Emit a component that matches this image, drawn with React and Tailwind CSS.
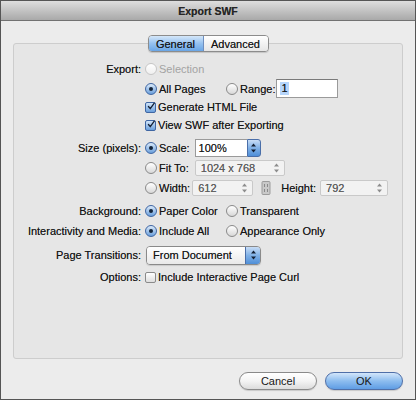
import React from 'react';

function Radio({ checked, disabled }) {
    const look = checked
        ? 'border-[#3f66a3] bg-linear-to-b from-[#dcebfa] to-[#6a9fdb]'
        : disabled
            ? 'border-[#c6c6c6] bg-linear-to-b from-[#ffffff] to-[#efefef]'
            : 'border-[#8a8a8a] bg-linear-to-b from-[#ffffff] to-[#d8d8d8]';
    return (
        <span className={`flex h-[12px] w-[12px] shrink-0 items-center justify-center rounded-full border ${look}`}>
            {checked && <span className="h-[4px] w-[4px] rounded-full bg-[#14243a]" />}
        </span>
    );
}

function Checkbox({ checked }) {
    return (
        <span className={`flex h-[11px] w-[11px] shrink-0 items-center justify-center rounded-[2px] border ${checked ? 'border-[#3f66a3] bg-linear-to-b from-[#d2e5f9] to-[#6a9fdb]' : 'border-[#8a8a8a] bg-linear-to-b from-[#ffffff] to-[#dedede]'}`}>
            {checked && (
                <svg width="11" height="11" viewBox="0 0 11 11" className="-mt-[2px] ml-[1px]">
                    <path d="M2 5.5 L4.5 8.5 L10 1" fill="none" stroke="#142033" strokeWidth="1.8" strokeLinecap="round" strokeLinejoin="round" />
                </svg>
            )}
        </span>
    );
}

function Arrows({ color = '#ffffff' }) {
    return (
        <svg width="7" height="10" viewBox="0 0 7 10">
            <path d="M3.5 0.5 L6 3.5 L1 3.5 Z" fill={color} />
            <path d="M3.5 9.5 L6 6.5 L1 6.5 Z" fill={color} />
        </svg>
    );
}

function BlueStepper({ className = '' }) {
    return (
        <span className={`flex items-center justify-center border border-[#4a6ea8] bg-linear-to-b from-[#c8ddf6] via-[#7fb0e6] to-[#4f8fd8] ${className}`}>
            <Arrows color="#142033" />
        </span>
    );
}

function Row({ label, children, className = '' }) {
    return (
        <div className={`flex items-center ${className}`}>
            <span className="w-[127px] shrink-0 text-right">{label}</span>
            <div className="ml-[4px] flex items-center">{children}</div>
        </div>
    );
}

function Opt({ children, className = '' }) {
    return <span className={`flex items-center gap-[2px] ${className}`}>{children}</span>;
}

function DisabledField({ value, width }) {
    return (
        <span className={`flex h-[16px] items-center justify-between rounded-[2px] border border-[#c9c9c9] bg-[#f2f2f2] pl-[5px] pr-[4px] text-[#5e5e5e] ${width}`}>
            <span>{value}</span>
            <Arrows color="#8c8c8c" />
        </span>
    );
}

export default function App() {
    return (
        <div className="flex h-[400px] w-[416px] flex-col overflow-hidden border border-[#555555] bg-[#ececec] font-['Liberation_Sans',Arial,sans-serif] text-[11px] leading-[18px] text-[#161616] [text-shadow:0_0_0.4px_rgba(0,0,0,0.55)]">
            <div className="flex h-[20px] shrink-0 items-center justify-center border-b border-[#727272] bg-linear-to-b from-[#dedede] to-[#a9a9a9] text-[10.5px] font-bold text-[#262626]">
                Export SWF
            </div>

            <div className="relative z-10 mt-[14px] flex justify-center">
                <div className="flex h-[17px] overflow-hidden rounded-[4px] border border-[#8c8c8c] shadow-[0_1px_1px_rgba(0,0,0,0.15)]">
                    <span className="flex w-[55px] items-center justify-center border-r border-[#6f8fbf] bg-linear-to-b from-[#d5e7f9] via-[#95c1ef] to-[#6aa6e6]">General</span>
                    <span className="flex w-[64px] items-center justify-center bg-linear-to-b from-[#ffffff] to-[#e6e6e6]">Advanced</span>
                </div>
            </div>

            <div className="mx-[12px] -mt-[9px] flex h-[316px] flex-col rounded-[3px] border border-[#cdcdcd] bg-[#e6e6e6] pt-[16px]">
                <Row label="Export:" className="h-[18px]">
                    <Opt className="text-[#a3a3a3] [text-shadow:none]">
                        <Radio disabled />
                        Selection
                    </Opt>
                </Row>
                <Row label="" className="mt-[1px] h-[19px]">
                    <Opt className="w-[81px]">
                        <Radio checked />
                        All Pages
                    </Opt>
                    <Opt>
                        <Radio />
                        Range:
                    </Opt>
                    <span className="ml-[1px] flex h-[19px] w-[62px] items-center border border-[#9a9a9a] border-t-[#7a7a7a] bg-white pl-[3px]">
                        <span className="bg-[#b6d5fb] px-[1px] leading-[13px]">1</span>
                    </span>
                </Row>
                <Row label="" className="h-[18px]">
                    <Opt>
                        <Checkbox checked />
                        Generate HTML File
                    </Opt>
                </Row>
                <Row label="" className="h-[18px]">
                    <Opt>
                        <Checkbox checked />
                        View SWF after Exporting
                    </Opt>
                </Row>

                <Row label="Size (pixels):" className="mt-[5px] h-[18px]">
                    <Opt>
                        <Radio checked />
                        Scale:
                    </Opt>
                    <span className="ml-[5px] flex h-[18px] w-[66px] items-stretch">
                        <span className="flex flex-1 items-center border border-r-0 border-[#9a9a9a] bg-white pl-[3px]">100%</span>
                        <BlueStepper className="w-[14px] rounded-r-[3px]" />
                    </span>
                </Row>
                <Row label="" className="mt-[2px] h-[18px]">
                    <Opt>
                        <Radio />
                        Fit To:
                    </Opt>
                    <span className="ml-[6px]">
                        <DisabledField value="1024 x 768" width="w-[90px]" />
                    </span>
                </Row>
                <Row label="" className="mt-[2px] h-[18px]">
                    <Opt>
                        <Radio />
                        Width:
                    </Opt>
                    <span className="ml-[2px]">
                        <DisabledField value="612" width="w-[61px]" />
                    </span>
                    <svg width="10" height="14" viewBox="0 0 10 14" className="ml-[8px]">
                        <rect x="1" y="0.5" width="8" height="13" rx="1" fill="#c9c9c9" stroke="#9c9c9c" />
                        <path d="M3.5 3 V6 M6.5 3 V6 M3.5 8 V11 M6.5 8 V11" stroke="#8a8a8a" strokeWidth="1" />
                    </svg>
                    <span className="ml-[10px]">Height:</span>
                    <span className="ml-[4px]">
                        <DisabledField value="792" width="w-[68px]" />
                    </span>
                </Row>

                <Row label="Background:" className="mt-[5px] h-[18px]">
                    <Opt className="w-[81px]">
                        <Radio checked />
                        Paper Color
                    </Opt>
                    <Opt>
                        <Radio />
                        Transparent
                    </Opt>
                </Row>
                <Row label="Interactivity and Media:" className="mt-[2px] h-[18px]">
                    <Opt className="w-[81px]">
                        <Radio checked />
                        Include All
                    </Opt>
                    <Opt>
                        <Radio />
                        Appearance Only
                    </Opt>
                </Row>
                <Row label="Page Transitions:" className="mt-[5px] h-[20px]">
                    <span className="ml-[1px] flex h-[19px] w-[115px] items-stretch overflow-hidden rounded-[4px] border border-[#8a8a8a] shadow-[0_1px_1px_rgba(0,0,0,0.12)]">
                        <span className="flex flex-1 items-center bg-linear-to-b from-[#ffffff] to-[#e9e9e9] pl-[6px]">From Document</span>
                        <BlueStepper className="w-[15px] border-y-0 border-r-0" />
                    </span>
                </Row>
                <Row label="Options:" className="mt-[3px] h-[18px]">
                    <Opt>
                        <Checkbox />
                        Include Interactive Page Curl
                    </Opt>
                </Row>
            </div>

            <div className="mr-[12px] mt-[13px] flex justify-end gap-[8px]">
                <button className="flex h-[18px] w-[78px] items-center justify-center rounded-full border border-[#8a8a8a] bg-linear-to-b from-[#ffffff] via-[#f4f4f4] to-[#dcdcdc] shadow-[0_1px_1px_rgba(0,0,0,0.15)]">
                    Cancel
                </button>
                <button className="flex h-[18px] w-[78px] items-center justify-center rounded-full border border-[#4f6fa8] bg-linear-to-b from-[#d3e6fa] via-[#8dbdef] to-[#5f9de4] shadow-[0_1px_1px_rgba(0,0,0,0.15)]">
                    OK
                </button>
            </div>
        </div>
    );
}
